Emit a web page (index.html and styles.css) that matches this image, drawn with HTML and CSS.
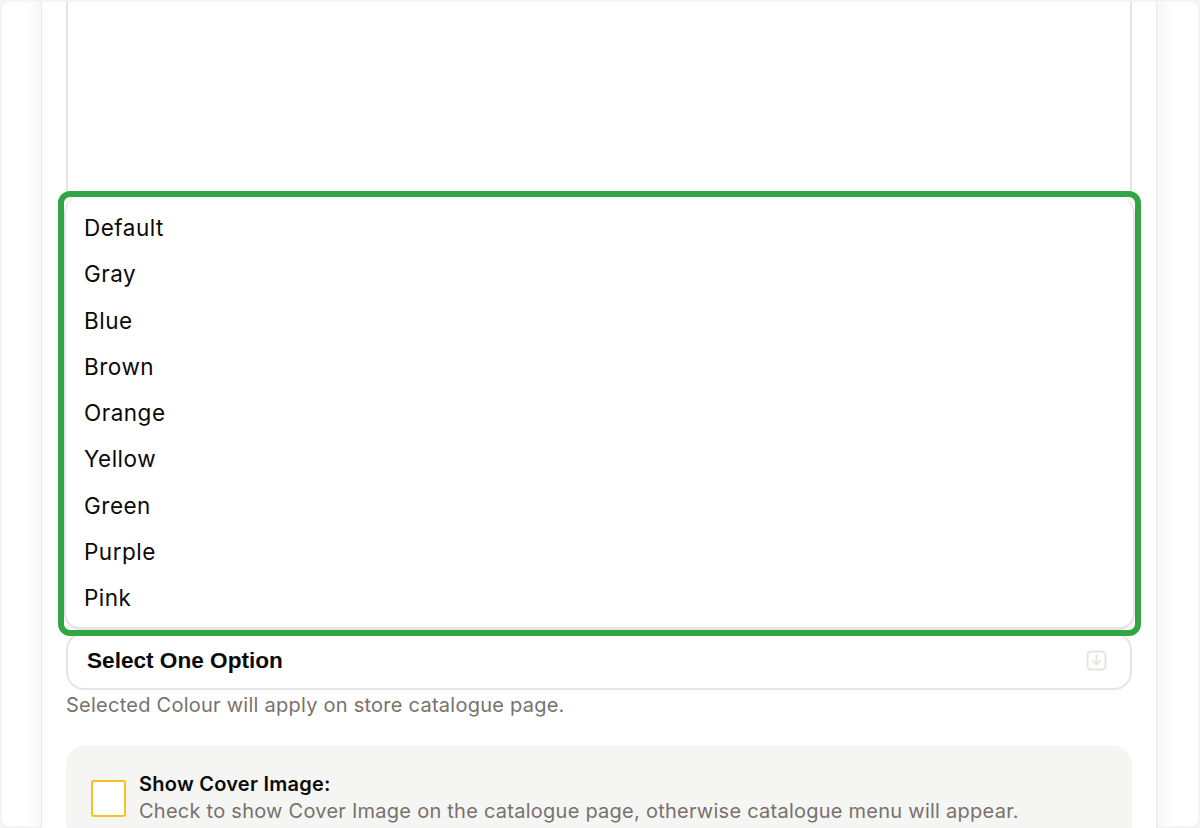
FILE: index.html
```html
<!DOCTYPE html>
<html lang="en">
<head>
    <meta charset="UTF-8">
    <meta name="viewport" content="width=device-width, initial-scale=1.0">
    <title>Catalogue Settings</title>
    <link rel="stylesheet" href="styles.css">
</head>
<body>
    <div class="frame">
        <div class="panel">
            <div class="textarea"></div>

            <div class="select">
                <span>Select One Option</span>
                <svg class="select-icon" width="21" height="21" viewBox="0 0 21 21" fill="none" stroke="#e5e5e3" stroke-width="2" stroke-linecap="round" stroke-linejoin="round">
                    <rect x="1.5" y="1.5" width="18" height="18" rx="3.5"/>
                    <path d="M10.5 5.5v9M6.5 10.5l4 4 4-4"/>
                </svg>
            </div>
            <p class="help">Selected Colour will apply on store catalogue page.</p>

            <div class="cover">
                <div class="checkbox"></div>
                <div>
                    <div class="cover-title">Show Cover Image:</div>
                    <div class="cover-text">Check to show Cover Image on the catalogue page, otherwise catalogue menu will appear.</div>
                </div>
            </div>
        </div>

        <!-- dropdown with the green highlight round it -->
        <div class="highlight">
            <ul class="menu">
                <li>Default</li>
                <li>Gray</li>
                <li>Blue</li>
                <li>Brown</li>
                <li>Orange</li>
                <li>Yellow</li>
                <li>Green</li>
                <li>Purple</li>
                <li>Pink</li>
            </ul>
        </div>
    </div>
</body>
</html>
```

FILE: styles.css
```css
html, body {
    margin: 0;
    height: 100%;
    overflow: hidden;
}

body {
    background-color: #f3f3f8;
    font-family: 'Inter', 'Liberation Sans', sans-serif;
    color: #0c0a09;
}

.frame {
    position: relative;
    box-sizing: border-box;
    height: 828px;
    padding: 2px;
    overflow: hidden;
}

.frame::before {
    content: '';
    position: absolute;
    inset: 2px;
    border-radius: 8px;
    background: linear-gradient(90deg, #fff 0, #fff 24px, #f7f7f9 40px, #f7f7f9 1155px, #fff 1172px, #fff 1196px);
}

.panel {
    position: relative;
    box-sizing: border-box;
    width: 1116px;
    height: 826px;
    margin-left: 39px;
    padding: 0 24px;
    background-color: #fff;
    border-left: 1px solid #e9e9ec;
    border-right: 1px solid #e9e9ec;
}

.textarea {
    height: 630px;
    border-left: 2px solid #e7e5e4;
    border-right: 2px solid #e7e5e4;
}

.select {
    box-sizing: border-box;
    height: 58px;
    display: flex;
    justify-content: space-between;
    align-items: center;
    padding: 0 23px 1px 19px;
    border: 2px solid #e7e5e4;
    border-radius: 18px;
    font-family: 'Liberation Sans', sans-serif;
    font-size: 22.6px;
    font-weight: bold;
}

.help {
    margin: 1px 0 0;
    font-size: 20px;
    line-height: 28px;
    letter-spacing: 0.25px;
    color: #78716c;
}

.cover {
    display: flex;
    gap: 13px;
    margin-top: 26px;
    padding: 26px 25px 20px;
    background-color: #f5f5f4;
    border-radius: 20px;
}

.checkbox {
    box-sizing: border-box;
    flex: none;
    width: 35px;
    height: 37px;
    margin-top: 9px;
    background-color: #fff;
    border: 2px solid #fbbf24;
    border-radius: 3px;
}

.cover-title {
    font-size: 20px;
    font-weight: 600;
    line-height: 27px;
    letter-spacing: 0.25px;
}

.cover-text {
    font-size: 20px;
    line-height: 26px;
    letter-spacing: 0.25px;
    color: #78716c;
    white-space: nowrap;
}

.highlight {
    position: absolute;
    left: 58px;
    top: 191px;
    box-sizing: border-box;
    width: 1083px;
    height: 445px;
    border: 6px solid #34a547;
    border-radius: 12px;
    background-color: #fff;
}

.menu {
    box-sizing: border-box;
    height: 100%;
    margin: 0;
    padding: 8px 0 0 18px;
    list-style: none;
    font-size: 22.5px;
    letter-spacing: 0.5px;
    border-right: 2px solid #e7e5e4;
    border-bottom: 3px solid #e7e5e4;
    border-left: 2px solid #e7e5e4;
    border-radius: 16px;
}

.menu li {
    height: 46.25px;
    line-height: 46px;
}
```
